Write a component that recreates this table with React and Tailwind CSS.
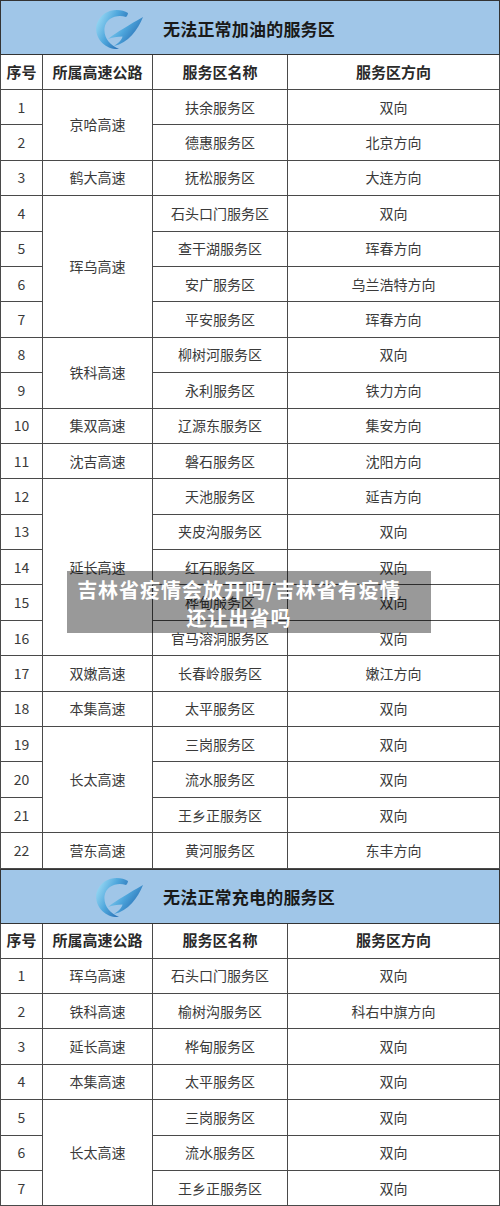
import React from 'react';

const fuelRows = [
  { no: 1, road: '京哈高速', span: 2, name: '扶余服务区', dir: '双向' },
  { no: 2, name: '德惠服务区', dir: '北京方向' },
  { no: 3, road: '鹤大高速', span: 1, name: '抚松服务区', dir: '大连方向' },
  { no: 4, road: '珲乌高速', span: 4, name: '石头口门服务区', dir: '双向' },
  { no: 5, name: '查干湖服务区', dir: '珲春方向' },
  { no: 6, name: '安广服务区', dir: '乌兰浩特方向' },
  { no: 7, name: '平安服务区', dir: '珲春方向' },
  { no: 8, road: '铁科高速', span: 2, name: '柳树河服务区', dir: '双向' },
  { no: 9, name: '永利服务区', dir: '铁力方向' },
  { no: 10, road: '集双高速', span: 1, name: '辽源东服务区', dir: '集安方向' },
  { no: 11, road: '沈吉高速', span: 1, name: '磐石服务区', dir: '沈阳方向' },
  { no: 12, road: '延长高速', span: 5, name: '天池服务区', dir: '延吉方向' },
  { no: 13, name: '夹皮沟服务区', dir: '双向' },
  { no: 14, name: '红石服务区', dir: '双向' },
  { no: 15, name: '桦甸服务区', dir: '双向' },
  { no: 16, name: '官马溶洞服务区', dir: '双向' },
  { no: 17, road: '双嫩高速', span: 1, name: '长春岭服务区', dir: '嫩江方向' },
  { no: 18, road: '本集高速', span: 1, name: '太平服务区', dir: '双向' },
  { no: 19, road: '长太高速', span: 3, name: '三岗服务区', dir: '双向' },
  { no: 20, name: '流水服务区', dir: '双向' },
  { no: 21, name: '王乡正服务区', dir: '双向' },
  { no: 22, road: '营东高速', span: 1, name: '黄河服务区', dir: '东丰方向' },
];

const chargeRows = [
  { no: 1, road: '珲乌高速', span: 1, name: '石头口门服务区', dir: '双向' },
  { no: 2, road: '铁科高速', span: 1, name: '榆树沟服务区', dir: '科右中旗方向' },
  { no: 3, road: '延长高速', span: 1, name: '桦甸服务区', dir: '双向' },
  { no: 4, road: '本集高速', span: 1, name: '太平服务区', dir: '双向' },
  { no: 5, road: '长太高速', span: 3, name: '三岗服务区', dir: '双向' },
  { no: 6, name: '流水服务区', dir: '双向' },
  { no: 7, name: '王乡正服务区', dir: '双向' },
];

// 高速公路标志
const Logo = ({ id }) => (
  <svg width="48" height="42" viewBox="0 0 48 42" className="shrink-0">
    <defs>
      <linearGradient id={id} x1="0" y1="0.2" x2="1" y2="0.8">
        <stop offset="0" stopColor="#9edcf5" />
        <stop offset="0.45" stopColor="#4ea6dc" />
        <stop offset="1" stopColor="#1d5ea8" />
      </linearGradient>
    </defs>
    <path
      d="M33 5 C24 -1 6 1 1.5 17 C-1 30 10 42 24 41 C15 37 8.5 30 9.5 20 C11 10 22 6 31 9 C32 8 33 6.5 33 5 Z"
      fill={`url(#${id})`}
    />
    <path
      d="M13 31 C22 24 34 17 48 9 C43 22 33 35 19 38 C25 34 27 31 27.5 28.5 C22 28.5 17 29.5 13 31 Z"
      fill={`url(#${id})`}
    />
  </svg>
);

const cell = 'border border-[#4a4a4a] text-center align-middle';

const Section = ({ title, rows, logoId }) => (
  <table className="w-full table-fixed border-collapse">
    <colgroup>
      <col className="w-[42px]" />
      <col className="w-[110px]" />
      <col className="w-[135px]" />
      <col />
    </colgroup>
    <tbody>
      <tr className="h-[54px]">
        <td colSpan={4} className="border border-[#333] bg-[#a0c6e8] p-0">
          <div className="flex items-center gap-5 pl-[94px] pt-[2px]">
            <Logo id={logoId} />
            <span className="text-[17px] font-bold text-[#1a1a1a] tracking-[0.2px]">{title}</span>
          </div>
        </td>
      </tr>
      <tr className="h-[35px] bg-white text-[15px] font-bold text-[#2a2a2a]">
        <td className={cell}>序号</td>
        <td className={cell}>所属高速公路</td>
        <td className={cell}>服务区名称</td>
        <td className={cell}>服务区方向</td>
      </tr>
      {rows.map((r) => (
        <tr key={r.no} className="h-[35.4px] bg-white text-[14px] text-[#3a3a3a]">
          <td className={cell}>{r.no}</td>
          {r.road ? (
            <td rowSpan={r.span} className={cell}>
              {r.road}
            </td>
          ) : null}
          <td className={cell}>{r.name}</td>
          <td className={cell}>{r.dir}</td>
        </tr>
      ))}
    </tbody>
  </table>
);

export default function App() {
  return (
    <div
      className="relative w-[500px] bg-white overflow-hidden"
      style={{ fontFamily: '"Noto Sans CJK SC", "Noto Sans", sans-serif' }}
    >
      <Section title="无法正常加油的服务区" rows={fuelRows} logoId="g1" />
      <Section title="无法正常充电的服务区" rows={chargeRows} logoId="g2" />

      {/* 标题遮罩 */}
      <div className="absolute left-[67px] top-[571px] w-[364px] h-[62px] bg-black/40 flex flex-col items-center justify-center pt-1 pr-5 text-white text-[20px] font-bold leading-[28px] tracking-[1px]">
        <span>吉林省疫情会放开吗/吉林省有疫情</span>
        <span>还让出省吗</span>
      </div>
    </div>
  );
}
